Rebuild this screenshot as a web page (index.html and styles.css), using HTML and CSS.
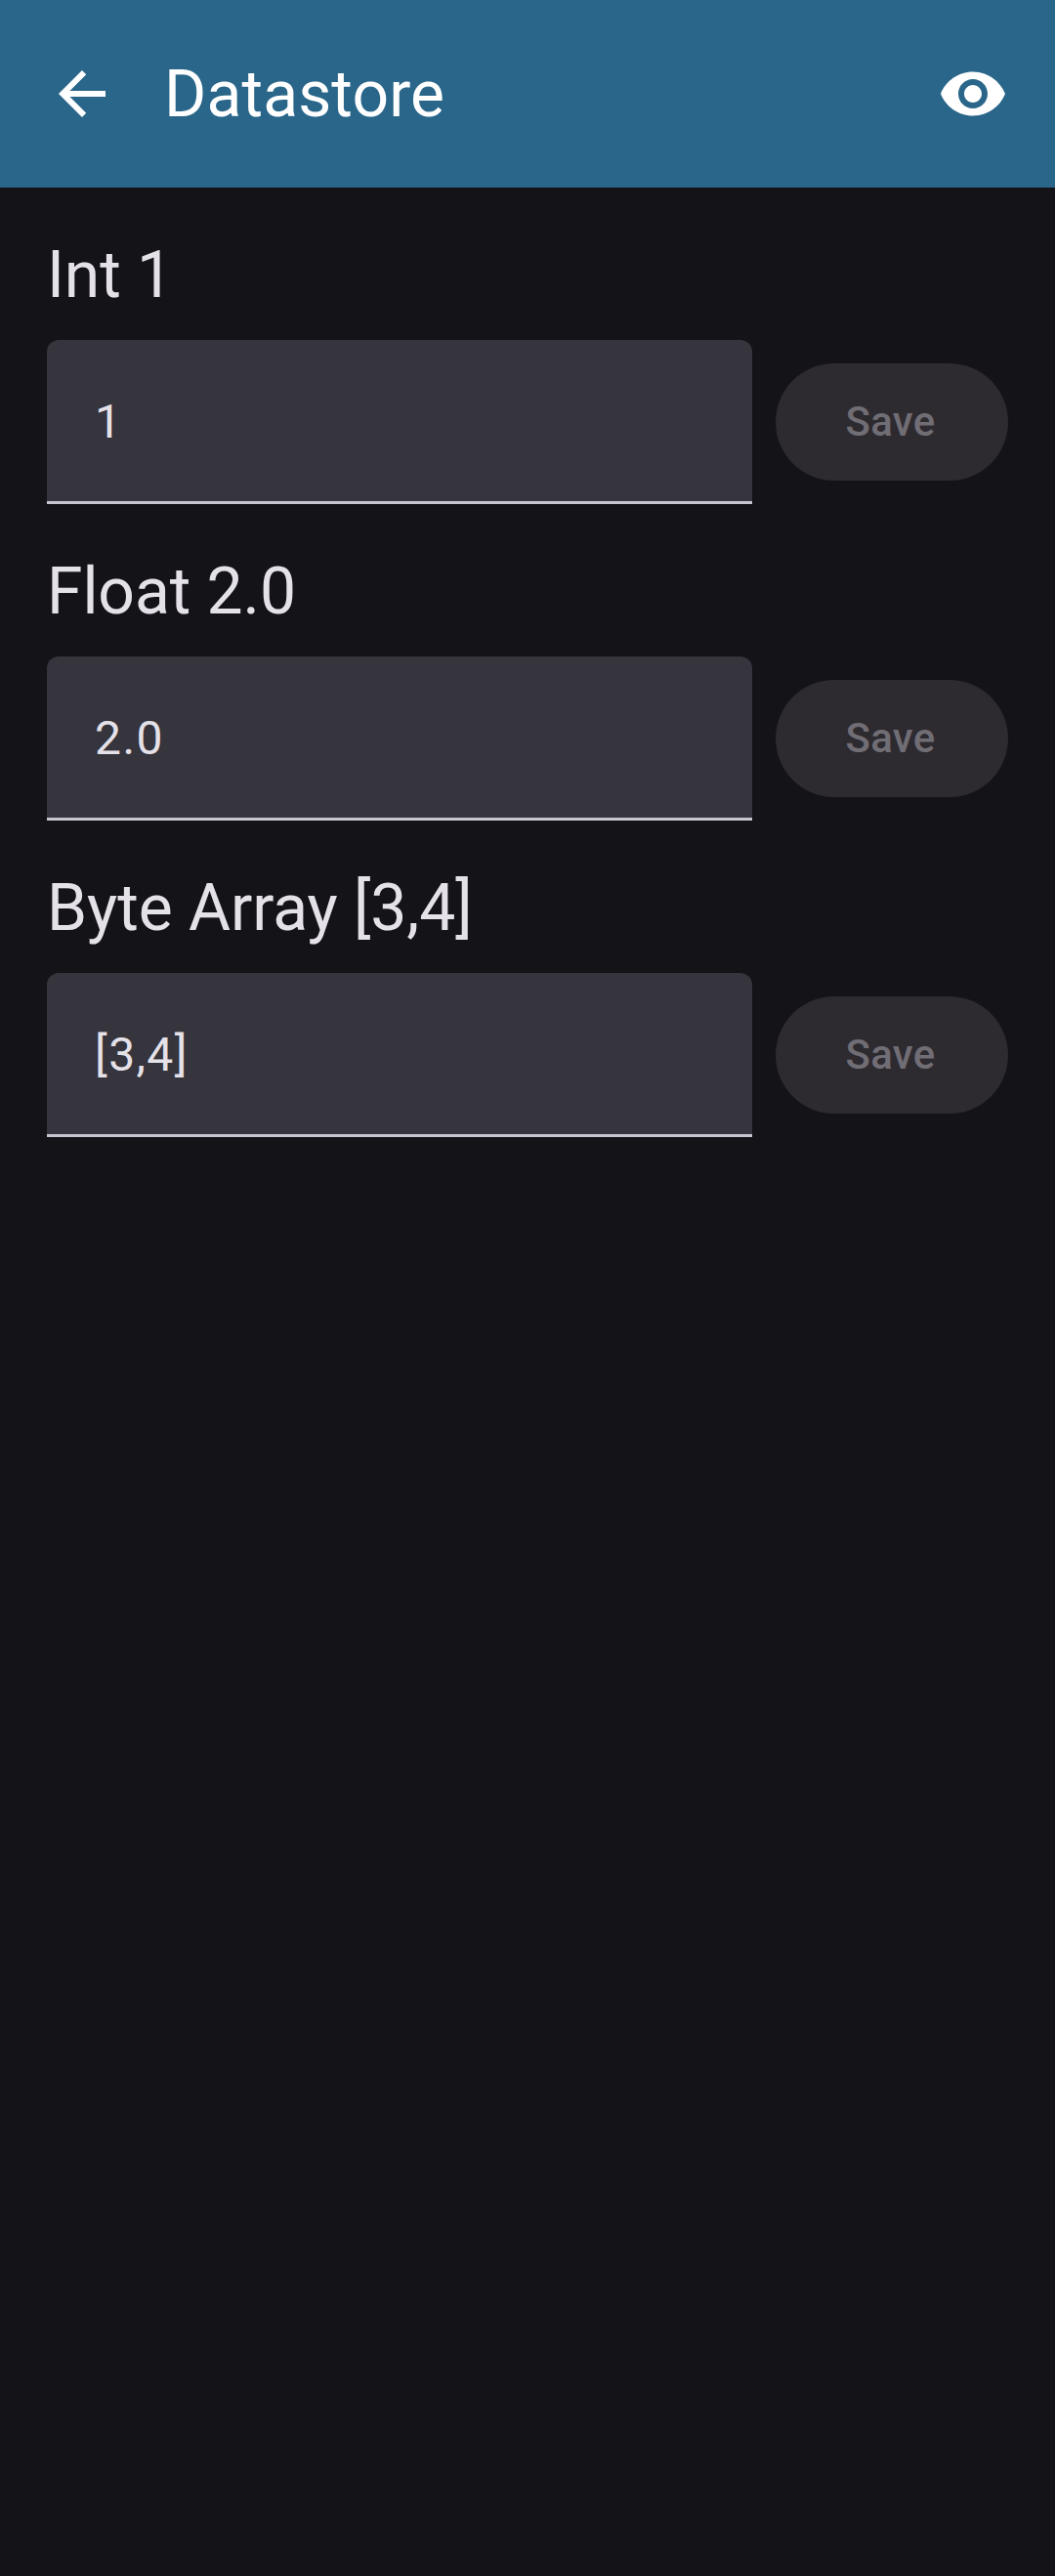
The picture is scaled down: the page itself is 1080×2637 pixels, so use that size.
FILE: index.html
```html
<!DOCTYPE html>
<html lang="en">
<head>
<meta charset="utf-8">
<title>Datastore</title>
<link rel="stylesheet" href="styles.css">
</head>
<body>
<header class="bar">
  <svg class="back" viewBox="0 0 24 24"><path d="M20 11H7.83l5.59-5.59L12 4l-8 8 8 8 1.41-1.41L7.83 13H20v-2z"/></svg>
  <h1 class="title">Datastore</h1>
  <svg class="eye" viewBox="0 0 24 24"><path d="M12 4.5C7 4.5 2.73 7.61 1 12c1.73 4.39 6 7.5 11 7.5s9.27-3.11 11-7.5c-1.73-4.39-6-7.5-11-7.5zM12 17c-2.76 0-5-2.24-5-5s2.24-5 5-5 5 2.24 5 5-2.24 5-5 5zm0-8c-1.66 0-3 1.34-3 3s1.34 3 3 3 3-1.34 3-3-1.34-3-3-3z"/></svg>
</header>
<main class="list">
  <section class="item">
    <h2 class="label">Int 1</h2>
    <div class="row"><div class="field">1</div><button class="save" disabled>Save</button></div>
  </section>
  <section class="item">
    <h2 class="label">Float 2.0</h2>
    <div class="row"><div class="field">2.0</div><button class="save" disabled>Save</button></div>
  </section>
  <section class="item">
    <h2 class="label">Byte Array [3,4]</h2>
    <div class="row"><div class="field">[3,4]</div><button class="save" disabled>Save</button></div>
  </section>
</main>
</body>
</html>
```
FILE: styles.css
```css
* { box-sizing: border-box; }
body {
  margin: 0;
  min-height: 2637px;
  background: #141318;
  color: #e5e1e9;
  font-family: Roboto, sans-serif;
}
.bar {
  display: flex;
  align-items: center;
  height: 192px;
  padding: 0 48px;
  background: #296689;
  color: #fff;
}
.bar svg { width: 72px; height: 72px; fill: currentColor; flex: none; }
.title { flex: 1; margin: 0 0 0 48px; padding-top: 1px; font-size: 66px; line-height: 84px; font-weight: 400; letter-spacing: 0.12px; }
.list { padding: 48px 48px 0; }
.item { height: 324px; }
.label { margin: 0 0 24px; font-size: 66px; line-height: 84px; font-weight: 400; letter-spacing: -0.08px; }
.row { display: flex; align-items: center; gap: 24px; }
.field {
  flex: 1;
  height: 168px;
  padding: 0 48px 0 49px;
  border-bottom: 3px solid #c8c5d0;
  border-radius: 12px 12px 0 0;
  background: #36343c;
  font-size: 48px;
  line-height: 168px;
  letter-spacing: 1.4px;
}
.save {
  width: 238px;
  height: 120px;
  padding: 0 3px 0 0;
  border: 0;
  border-radius: 60px;
  background: #2d2a30;
  color: #706d74;
  font: 500 42px/60px Roboto, sans-serif;
  letter-spacing: 0.3px;
}
```
